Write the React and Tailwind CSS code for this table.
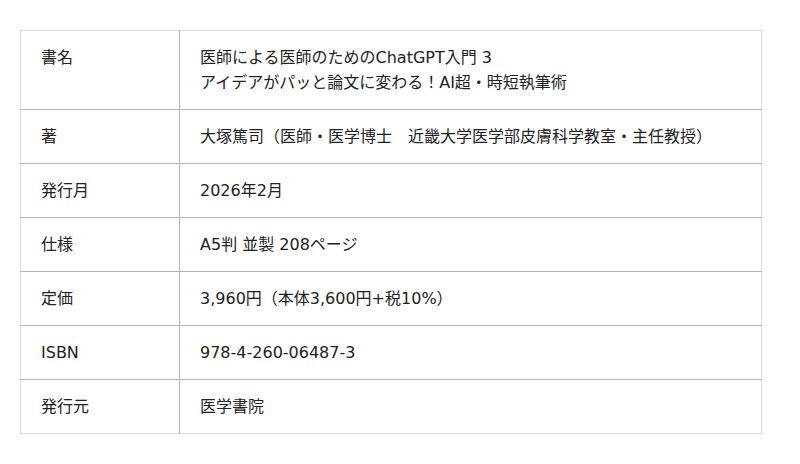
const rows = [
  { label: '書名', value: ['医師による医師のためのChatGPT入門 3', 'アイデアがパッと論文に変わる！AI超・時短執筆術'] },
  { label: '著', value: ['大塚篤司（医師・医学博士　近畿大学医学部皮膚科学教室・主任教授）'] },
  { label: '発行月', value: ['2026年2月'] },
  { label: '仕様', value: ['A5判 並製 208ページ'] },
  { label: '定価', value: ['3,960円（本体3,600円+税10%）'] },
  { label: 'ISBN', value: ['978-4-260-06487-3'] },
  { label: '発行元', value: ['医学書院'] },
];

export default function App() {
  return (
    <div
      className="w-[800px] h-[464px] bg-white pt-[30px] pl-[20px]"
      style={{ fontFamily: '"DejaVu Sans", "Noto Sans CJK JP", sans-serif' }}
    >
      <table className="w-[742px] border-collapse border border-[#dddddd] text-[16px] leading-[25px] text-[#222222]">
        <tbody>
          {rows.map((r, i) => (
            <tr key={i} className={i > 0 ? 'border-t border-[#b5b5b5]' : ''}>
              <td className="w-[159px] align-top py-[14px] pl-[20px] border-r border-[#b5b5b5]">{r.label}</td>
              <td className="align-top py-[14px] pl-[20px]">
                {r.value.map((v, j) => (
                  <div key={j}>{v}</div>
                ))}
              </td>
            </tr>
          ))}
        </tbody>
      </table>
    </div>
  );
}
